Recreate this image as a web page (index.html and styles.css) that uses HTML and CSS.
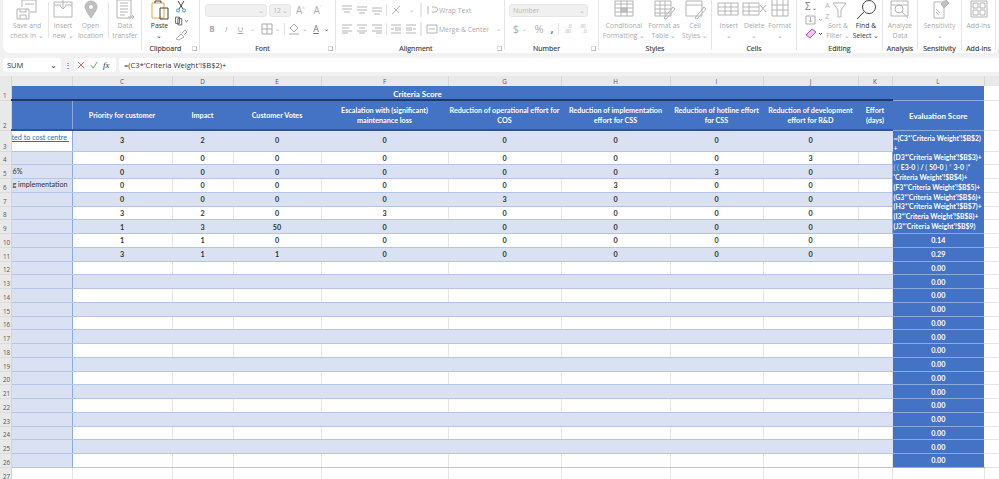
FILE: index.html
```html
<!DOCTYPE html>
<html lang="en">
<head>
<meta charset="utf-8">
<title>Criteria Score</title>
<link rel="stylesheet" href="styles.css">
</head>
<body>
<div class="app">
<header class="ribbon">
  <section class="group g-file">
    <div class="tools">
      <div class="tool t-save"><svg class="ic" viewBox="0 0 28 20"><path d="M4 9h12v10H4zM7 9v3h6V9M7 19v-4h6v4M9 7V0h14v12h-6M12 4h9"/></svg><span>Save and<br>check in ⌄</span></div>
      <i class="vsep"></i>
      <div class="tool t-new"><svg class="ic" viewBox="0 0 28 20"><path d="M5 2h18v15H5zM5 5h7M16 5h7M14 -2v11M11 6l3 3 3-3"/></svg><span>Insert<br>new ⌄</span></div>
      <div class="tool t-open"><svg class="ic" viewBox="0 0 28 20"><path d="M14 18C10 12 8 9 8 7a6 6 0 0 1 12 0c0 2-2 5-6 11z" class="fill"/><circle cx="14" cy="7" r="2.500" class="hole"/></svg><span>Open<br>location</span></div>
      <i class="vsep"></i>
      <div class="tool t-data"><svg class="ic" viewBox="0 0 28 20"><path d="M6 0h14v18H6zM9 3h8M9 6h8M9 9h8M9 12h8M9 15h5M17 17h6M21 15l2 2-2 2"/></svg><span>Data<br>transfer</span></div>
    </div>
  </section>
  <section class="group g-clip">
    <div class="tools">
      <div class="tool t-paste"><svg class="ic" viewBox="0 0 28 20"><path class="orange" d="M6 3h12v15H6z"/><path class="dark" d="M9 3V1h6v2M14 8h8v11h-8z"/></svg><span class="dark-label">Paste<br>⌄</span></div>
      <div class="stack">
        <svg class="mini" viewBox="0 0 14 12"><path class="dark" d="M4 0l5 8M10 0L5 8"/><circle class="blue" cx="4" cy="9.500" r="1.500"/><circle class="blue" cx="10" cy="9.500" r="1.500"/></svg>
        <svg class="mini" viewBox="0 0 18 12"><path class="dark" d="M2 1h5v8H2zM5 3h5v8H5zM14 5l2 2 2-2"/></svg>
        <svg class="mini" viewBox="0 0 14 12"><path d="M2 10l5-5 3 3-5 3zM8 4l3-3 2 2-3 3"/></svg>
      </div>
    </div>
    <h2>Clipboard</h2><b class="launch"></b>
  </section>
  <section class="group g-font">
    <div class="rows">
      <div class="row r-font"><div class="combo c-name"><u>⌄</u></div><div class="combo c-size">12<u>⌄</u></div><span class="glyph big">A<sup>^</sup></span><span class="glyph big">A<sup>˅</sup></span></div>
      <div class="row r-fmt"><span class="glyph bold">B</span><span class="glyph ital">I</span><span class="glyph und">U</span><span class="chev">⌄</span><svg class="mini m-border" viewBox="0 0 14 12"><path d="M2 1h10v10H2zM7 1v10M2 6h10"/></svg><span class="chev narrow">⌄</span><i class="thin t-font"></i><svg class="mini" viewBox="0 0 14 12"><path d="M7 1l4 4-4 4-4-4zM2 11h10"/></svg><span class="chev narrow">⌄</span><span class="glyph und2">A</span><span class="chev narrow dark-chev">⌄</span></div>
    </div>
    <h2>Font</h2><b class="launch"></b>
  </section>
  <section class="group g-align">
    <div class="rows">
      <div class="row r-al"><svg class="lines" viewBox="0 0 12 10"><path d="M1 1h10M1 4h10M3 7h6"/></svg><svg class="lines" viewBox="0 0 12 10"><path d="M1 2h10M1 5h10M3 8h6"/></svg><svg class="lines" viewBox="0 0 12 10"><path d="M1 3h10M1 6h10M3 9h6"/></svg><i class="thin"></i><svg class="lines" viewBox="0 0 12 10"><path d="M2 9l8-8M4 3l5 5"/></svg><span class="chev c12">⌄</span><i class="thick"></i><span class="text-tool"><svg class="lines" viewBox="0 0 12 10"><path d="M2 1v8M6 2h3a2 2 0 0 1 0 5H6"/></svg>Wrap Text</span></div>
      <div class="row r-al"><svg class="lines" viewBox="0 0 12 10"><path d="M1 1h10M1 4h7M1 7h10M1 9h6"/></svg><svg class="lines" viewBox="0 0 12 10"><path d="M1 1h10M3 4h6M1 7h10M3 9h6"/></svg><svg class="lines" viewBox="0 0 12 10"><path d="M1 1h10M4 4h7M1 7h10M5 9h6"/></svg><i class="thin"></i><svg class="lines" viewBox="0 0 12 10"><path d="M1 1h10M5 4h6M5 6h6M1 9h10M4 5H1"/></svg><svg class="lines" viewBox="0 0 12 10"><path d="M1 1h10M1 4h6M1 6h6M1 9h10M8 5h3"/></svg><i class="thick"></i><span class="text-tool"><svg class="lines" viewBox="0 0 12 10"><path d="M1 1h10v8H1zM3 5h6"/></svg>Merge &amp; Center<span class="chev wide">⌄</span></span></div>
    </div>
    <h2>Alignment</h2><b class="launch"></b>
  </section>
  <section class="group g-num">
    <div class="rows">
      <div class="row"><div class="combo c-num">Number<u>⌄</u></div></div>
      <div class="row r-num"><span class="glyph cur">$</span><span class="chev">⌄</span><span class="glyph cur pct">%</span><span class="glyph cur com">,</span><i class="thin"></i><span class="dec">←.0<br>.00</span><span class="dec">.00<br>→.0</span></div>
    </div>
    <h2>Number</h2><b class="launch"></b>
  </section>
  <section class="group g-styles">
    <div class="tools">
      <div class="tool t-cond"><svg class="ic" viewBox="0 0 28 20"><path d="M5 1h18v15H5zM5 4h18M5 8h18M5 12h18M11 1v15M17 1v15"/><path class="fill" d="M11 8h6v4h-6z"/></svg><span>Conditional<br>Formatting ⌄</span></div>
      <div class="tool t-tab"><svg class="ic" viewBox="0 0 28 20"><path d="M5 1h16v15H5zM5 5h16M5 9h16M5 13h16M10 1v15M15 1v15M14 18l9-11 2 2-9 10z"/></svg><span>Format as<br>Table ⌄</span></div>
      <div class="tool t-cell"><svg class="ic" viewBox="0 0 28 20"><path d="M5 1h16v15H5zM5 5h16M14 18l9-11 2 2-9 10z"/></svg><span>Cell<br>Styles ⌄</span></div>
    </div>
    <h2>Styles</h2>
  </section>
  <section class="group g-cells">
    <div class="tools">
      <div class="tool t-cl"><svg class="ic" viewBox="0 0 28 20"><path d="M3 3h20v12H3zM3 7h20M3 11h20M10 3v12M16 3v12"/></svg><span>Insert<br>⌄</span></div>
      <div class="tool t-cl"><svg class="ic" viewBox="0 0 28 20"><path d="M3 3h16v12H3zM3 7h16M3 11h16M9 3v12M20 5l6 7M26 5l-6 7"/></svg><span>Delete<br>⌄</span></div>
      <div class="tool t-cl"><svg class="ic" viewBox="0 0 28 20"><path d="M6 -1h16v17H6zM6 5h16M6 10h16M11 -1v17M17 -1v17"/></svg><span>Format<br>⌄</span></div>
    </div>
    <h2>Cells</h2>
  </section>
  <section class="group g-edit">
    <div class="tools">
      <div class="stack s-edit">
        <span class="sigma">Σ<span class="chev dark-chev">⌄</span></span>
        <svg class="mini m-wide" viewBox="0 0 18 12"><path d="M1 2h9v8H1zM5.500 3v5M4 6.500l1.500 1.500 1.500-1.500M14 5l1.500 1.500L17 5"/></svg>
        <svg class="mini m-wide" viewBox="0 0 18 12"><path class="purple" d="M1 7l6-6 4 3-6 6z"/><path class="dark" d="M14 5l1.500 1.500L17 5"/></svg>
      </div>
      <div class="tool t-sort"><svg class="ic" viewBox="0 0 28 20"><text x="1" y="8.200" class="svgt">A</text><text x="1" y="18.500" class="svgt">Z</text><path d="M9 3h13l-5 7v7h-3v-7z"/></svg><span>Sort &amp;<br>Filter ⌄</span></div>
      <div class="tool t-find"><svg class="ic" viewBox="0 0 28 20"><circle class="dark" cx="17" cy="7" r="6.500"/><path class="dark" d="M12 12l-7 7"/></svg><span class="dark-label">Find &amp;<br>Select ⌄</span></div>
    </div>
    <h2>Editing</h2>
  </section>
  <section class="group g-an">
    <div class="tools">
      <div class="tool t-an"><svg class="ic" viewBox="0 0 28 20"><path d="M5 1h17v15H5zM5 5h17"/><circle cx="13" cy="9" r="4"/><path d="M16 12l6 6"/></svg><span>Analyze<br>Data</span></div>
    </div>
    <h2>Analysis</h2>
  </section>
  <section class="group g-sens">
    <div class="tools">
      <div class="tool t-se"><svg class="ic" viewBox="0 0 28 20"><path d="M8 2h10v16H8z"/><path class="fill" d="M15 4l5-4 3 3-5 5z"/><path d="M10 9l4 4M10 12l3 3"/></svg><span>Sensitivity<br>⌄</span></div>
    </div>
    <h2>Sensitivity</h2>
  </section>
  <section class="group g-add">
    <div class="tools">
      <div class="tool t-ad"><svg class="ic" viewBox="0 0 28 20"><path d="M6 1h16v16H6zM8 3h5v5H8zM15 3h5v5h-5zM8 10h5v5H8zM15 10h5v5h-5z"/></svg><span>Add-ins</span></div>
    </div>
    <h2>Add-ins</h2>
  </section>
</header>

<div class="formula">
  <div class="namebox"><span>SUM</span><span class="nb-chev">⌄</span></div>
  <div class="dots">⋮</div>
  <div class="fbtns">
    <svg class="fb" viewBox="0 0 10 10"><path class="red" d="M1 1l8 8M9 1l-8 8"/></svg>
    <svg class="fb" viewBox="0 0 10 10"><path class="green" d="M1 5l3 4 5-8"/></svg>
    <span class="fx">fx</span>
  </div>
  <div class="finput">=(C3*'Criteria Weight'!$B$2)+</div>
</div>

<div class="sheet">
<table>
  <colgroup>
    <col class="c-rh"><col class="c-a"><col class="c-c"><col class="c-d"><col class="c-e"><col class="c-f"><col class="c-g"><col class="c-h"><col class="c-i"><col class="c-j"><col class="c-k"><col class="c-l"><col class="c-m">
  </colgroup>
  <thead>
    <tr class="hdr"><th class="corner"></th><th></th><th>C</th><th>D</th><th>E</th><th>F</th><th>G</th><th>H</th><th>I</th><th>J</th><th>K</th><th>L</th><th></th></tr>
  </thead>
  <tbody>
    <tr class="r1"><th>1</th><td class="blue-dark"></td><td class="blue-dark title" colspan="7">Criteria Score</td><td class="blue-dark"></td><td class="blue-dark"></td><td class="blue-top"></td><td class="out"></td></tr>
    <tr class="r2"><th>2</th><td class="h h-a"></td><td class="h">Priority for customer</td><td class="h">Impact</td><td class="h">Customer Votes</td><td class="h">Escalation with (significant)<br>maintenance loss</td><td class="h">Reduction of operational effort for<br>COS</td><td class="h">Reduction of implementation<br>effort for CSS</td><td class="h">Reduction of hotline effort<br>for CSS</td><td class="h">Reduction of development<br>effort for R&amp;D</td><td class="h">Effort<br>(days)</td><td class="h score-h">Evaluation Score</td><td class="out"></td></tr>
    <tr class="r3 band"><th>3</th><td class="a a-link"><a href="#">ted to cost centre&nbsp;</a></td><td>3</td><td>2</td><td>0</td><td>0</td><td>0</td><td>0</td><td>0</td><td>0</td><td></td>
      <td class="score edit" rowspan="7">=(C3*'Criteria Weight'!$B$2)<br>+<br>(D3*'Criteria Weight'!$B$3)+<br><span class="p1">(</span> <span class="p2">(</span> E3-0 <span class="p2">)</span> / <span class="p3">(</span> 50-0 <span class="p3">)</span> <span class="p4">*</span> 3-0 <span class="p1">)</span>*<br>'Criteria Weight'!$B$4)+<br>(F3*'Criteria Weight'!$B$5)+<br>(G3*'Criteria Weight'!$B$6)+<br>(H3*'Criteria Weight'!$B$7)+<br>(I3*'Criteria Weight'!$B$8)+<br>(J3*'Criteria Weight'!$B$9)</td><td class="out"></td></tr>
    <tr><th>4</th><td class="a"></td><td>0</td><td>0</td><td>0</td><td>0</td><td>0</td><td>0</td><td>0</td><td>3</td><td></td><td class="out"></td></tr>
    <tr class="band"><th>5</th><td class="a a-text">6%</td><td>0</td><td>0</td><td>0</td><td>0</td><td>0</td><td>0</td><td>3</td><td>0</td><td></td><td class="out"></td></tr>
    <tr><th>6</th><td class="a a-text">g implementation</td><td>0</td><td>0</td><td>0</td><td>0</td><td>0</td><td>3</td><td>0</td><td>0</td><td></td><td class="out"></td></tr>
    <tr class="band"><th>7</th><td class="a"></td><td>0</td><td>0</td><td>0</td><td>0</td><td>3</td><td>0</td><td>0</td><td>0</td><td></td><td class="out"></td></tr>
    <tr><th>8</th><td class="a"></td><td>3</td><td>2</td><td>0</td><td>3</td><td>0</td><td>0</td><td>0</td><td>0</td><td></td><td class="out"></td></tr>
    <tr class="band"><th>9</th><td class="a"></td><td>1</td><td>3</td><td>50</td><td>0</td><td>0</td><td>0</td><td>0</td><td>0</td><td></td><td class="out"></td></tr>
    <tr><th>10</th><td class="a"></td><td>1</td><td>1</td><td>0</td><td>0</td><td>0</td><td>0</td><td>0</td><td>0</td><td></td><td class="score">0.14</td><td class="out"></td></tr>
    <tr class="band"><th>11</th><td class="a"></td><td>3</td><td>1</td><td>1</td><td>0</td><td>0</td><td>0</td><td>0</td><td>0</td><td></td><td class="score">0.29</td><td class="out"></td></tr>
    <tr><th>12</th><td class="a"></td><td></td><td></td><td></td><td></td><td></td><td></td><td></td><td></td><td></td><td class="score">0.00</td><td class="out"></td></tr>
    <tr class="band"><th>13</th><td class="a"></td><td></td><td></td><td></td><td></td><td></td><td></td><td></td><td></td><td></td><td class="score">0.00</td><td class="out"></td></tr>
    <tr><th>14</th><td class="a"></td><td></td><td></td><td></td><td></td><td></td><td></td><td></td><td></td><td></td><td class="score">0.00</td><td class="out"></td></tr>
    <tr class="band"><th>15</th><td class="a"></td><td></td><td></td><td></td><td></td><td></td><td></td><td></td><td></td><td></td><td class="score">0.00</td><td class="out"></td></tr>
    <tr><th>16</th><td class="a"></td><td></td><td></td><td></td><td></td><td></td><td></td><td></td><td></td><td></td><td class="score">0.00</td><td class="out"></td></tr>
    <tr class="band"><th>17</th><td class="a"></td><td></td><td></td><td></td><td></td><td></td><td></td><td></td><td></td><td></td><td class="score">0.00</td><td class="out"></td></tr>
    <tr><th>18</th><td class="a"></td><td></td><td></td><td></td><td></td><td></td><td></td><td></td><td></td><td></td><td class="score">0.00</td><td class="out"></td></tr>
    <tr class="band"><th>19</th><td class="a"></td><td></td><td></td><td></td><td></td><td></td><td></td><td></td><td></td><td></td><td class="score">0.00</td><td class="out"></td></tr>
    <tr><th>20</th><td class="a"></td><td></td><td></td><td></td><td></td><td></td><td></td><td></td><td></td><td></td><td class="score">0.00</td><td class="out"></td></tr>
    <tr class="band"><th>21</th><td class="a"></td><td></td><td></td><td></td><td></td><td></td><td></td><td></td><td></td><td></td><td class="score">0.00</td><td class="out"></td></tr>
    <tr><th>22</th><td class="a"></td><td></td><td></td><td></td><td></td><td></td><td></td><td></td><td></td><td></td><td class="score">0.00</td><td class="out"></td></tr>
    <tr class="band"><th>23</th><td class="a"></td><td></td><td></td><td></td><td></td><td></td><td></td><td></td><td></td><td></td><td class="score">0.00</td><td class="out"></td></tr>
    <tr><th>24</th><td class="a"></td><td></td><td></td><td></td><td></td><td></td><td></td><td></td><td></td><td></td><td class="score">0.00</td><td class="out"></td></tr>
    <tr class="band"><th>25</th><td class="a"></td><td></td><td></td><td></td><td></td><td></td><td></td><td></td><td></td><td></td><td class="score">0.00</td><td class="out"></td></tr>
    <tr><th>26</th><td class="a"></td><td></td><td></td><td></td><td></td><td></td><td></td><td></td><td></td><td></td><td class="score">0.00</td><td class="out"></td></tr>
    <tr class="r27"><th>27</th><td class="blank"></td><td class="blank"></td><td class="blank"></td><td class="blank"></td><td class="blank"></td><td class="blank"></td><td class="blank"></td><td class="blank"></td><td class="blank"></td><td class="blank"></td><td class="blank"></td><td class="blank"></td><td class="out"></td></tr>
  </tbody>
</table>
</div>
</div>
</body>
</html>
```
FILE: styles.css
```css
* { box-sizing: border-box; }
html, body { margin: 0; height: 100%; overflow: hidden; }
body { background: #f1f1f1; font-family: "Open Sans", "Noto Sans", sans-serif; color: #444; }
.app { width: 999px; height: 479px; display: flex; flex-direction: column; overflow: hidden; }

/* ribbon */
.ribbon { height: 53px; margin-left: 3px; flex: none; display: flex; align-items: flex-start; background: #fff; border-radius: 0 0 7px 7px; overflow: hidden; }
.group { position: relative; flex: none; height: 50px; display: flex; flex-direction: column; border-right: 1px solid #e4e4e4; }
.group h2 { margin: auto 0 -3px; font-size: 7px; line-height: 9px; font-weight: 400; color: #3c3c3c; text-align: center; -webkit-text-stroke: .15px #3c3c3c; }
.launch { position: absolute; right: 2px; bottom: -1px; width: 5px; height: 5px; border: 1px solid #bbb; border-top-color: #ddd; border-left-color: #ddd; }
.g-file { width: 139px; }
.g-clip { width: 58px; padding-right: 10px; }
.g-font { width: 136px; padding-right: 10px; }
.g-align { width: 169px; padding-right: 8px; }
.g-num { width: 94px; padding-right: 10px; }
.g-styles { width: 113px; }
.g-cells { width: 85px; }
.g-edit { width: 86px; }
.g-an { width: 35px; }
.g-sens { width: 44px; }
.g-add { width: 34px; }

.tools { display: flex; height: 41px; }
.tool { display: flex; flex-direction: column; align-items: center; flex: none; font-size: 6.800px; line-height: 9.500px; color: #ababab; text-align: center; white-space: nowrap; }
.tool span { display: block; margin-top: 1px; }
.ic { width: 28px; height: 20px; display: block; fill: none; stroke: #b4b4b4; stroke-width: 1; flex: none; }
.ic .fill, .fill { fill: #c0c0c0; }
.hole { fill: #fff; }
.dark { stroke: #444; fill: none; }
.orange { stroke: #e8a33a; fill: none; }
.blue { stroke: #4a90d0; fill: none; }
.purple { stroke: #b04ec0; fill: #e8c8ee; }
.dark-label { color: #333; }
.svgt { font-size: 7.500px; fill: #b4b4b4; stroke: none; font-family: "Open Sans", sans-serif; }
.vsep { flex: none; width: 1px; height: 36px; background: #e6e6e6; margin-top: 2px; }

.t-save { width: 42px; margin-left: 3px; }
.t-new { width: 28px; }
.t-open { width: 27px; margin-right: 4px; }
.t-data { width: 32px; }
.t-paste { width: 35px; }
.stack { display: flex; flex-direction: column; gap: 2px; padding-top: 1px; width: 20px; align-items: flex-start; margin-left: -3px; }
.mini { width: 14px; height: 12px; fill: none; stroke: #aaa; stroke-width: 1; flex: none; }
.m-wide { width: 18px; }

.rows { display: flex; flex-direction: column; height: 41px; padding-top: 3px; gap: 5px; }
.row { display: flex; align-items: center; height: 14px; white-space: nowrap; }
.r-font { padding-left: 5px; gap: 2px; }
.combo { height: 13px; border: 1px solid #e6e6e6; border-radius: 3px; background: #f0f0f0; font-size: 6.800px; line-height: 11px; color: #b8b8b8; display: flex; justify-content: space-between; padding: 0 2px 0 3px; }
.combo u { text-decoration: none; }
.c-name { width: 70px; justify-content: flex-end; }
.c-size { width: 24px; }
.glyph { font-size: 9px; line-height: 12px; color: #aaa; flex: none; }
.big { width: 15px; text-align: center; font-size: 10px; }
.big sup { font-size: 5px; line-height: 0; }
.r-fmt { padding-left: 5px; }
.bold { font-weight: 700; width: 14px; font-size: 8px; text-align: center; }
.ital { font-style: italic; width: 14px; font-size: 8px; text-align: center; }
.und { text-decoration: underline; width: 15px; font-size: 8px; text-align: center; }
.und2 { text-decoration: underline; width: 14px; margin-left: 1px; text-align: center; color: #777; }
.chev { font-size: 6px; line-height: 8px; color: #aaa; width: 9px; text-align: center; flex: none; }
.narrow { width: 7px; }
.c12 { width: 12px; }
.m-border { margin-left: 3px; }
.dark-chev { color: #333; }
.wide { margin-left: 4px; }
.thin { flex: none; width: 1px; height: 12px; background: #e2e2e2; }
.t-font { margin: 0 2px 0 3px; }
.thick { flex: none; width: 2px; height: 14px; background: #e8e8e8; margin-right: 1px; }

.r-al { padding-left: 5px; gap: 3px; }
.lines { width: 12px; height: 10px; fill: none; stroke: #b4b4b4; flex: none; }
.text-tool { display: flex; align-items: center; gap: 1px; font-size: 6.800px; color: #ababab; }

.c-num { width: 84px; margin-left: 4px; }
.r-num { padding-left: 7px; }
.cur { font-size: 11px; width: 8px; text-align: center; color: #aaa; }
.pct { margin-left: 3px; width: 14px; }
.com { color: #777; width: 10px; margin-left: 1px; font-weight: 700; }
.r-num .thin { margin: 0 2px 0 1px; }
.dec { font-size: 4.500px; line-height: 5px; color: #aaa; width: 13px; margin-right: 2px; text-align: center; flex: none; }

.g-styles .tools { padding-left: 7px; }
.t-cond { width: 36px; }
.t-tab { width: 36px; margin-left: 4px; }
.t-cell { width: 26px; }
.g-cells .tools { padding-left: 4px; }
.t-cl { width: 25.500px; }
.g-edit .tools { padding-left: 3px; }
.s-edit { width: 26px; padding-left: 5px; margin-left: 0; }
.sigma { font-size: 10px; line-height: 11px; color: #777; white-space: nowrap; }
.sigma .chev { width: 8px; display: inline-block; }
.t-sort { width: 24px; }
.t-find { width: 32px; }
.t-an, .t-se, .t-ad { width: 100%; }

/* formula bar */
.formula { height: 14px; margin-top: 5px; flex: none; display: flex; align-items: stretch; padding-left: 3px; }
.namebox { width: 58px; background: #fff; border-radius: 3px; font-size: 7.500px; line-height: 14px; color: #333; display: flex; justify-content: space-between; padding: 0 4px; flex: none; }
.dots { width: 13px; text-align: center; font-size: 8px; line-height: 14px; color: #333; flex: none; }
.fbtns { width: 42px; background: #fff; border-radius: 3px; display: flex; align-items: center; gap: 5px; padding-left: 3px; flex: none; }
.fb { width: 8px; height: 8px; fill: none; flex: none; }
.red { stroke: #d8453a; }
.green { stroke: #3a9a55; }
.fx { font-family: "Liberation Serif", serif; font-style: italic; font-size: 9px; line-height: 14px; color: #333; }
.finput { flex: 1; margin-left: 3px; background: #fff; border-radius: 3px 0 0 3px; font-size: 7.600px; line-height: 14px; padding-left: 5px; color: #333; }

/* sheet */
.sheet { flex: 1; margin-top: 4px; overflow: hidden; background: #fff; }
table { table-layout: fixed; border-collapse: collapse; width: 999px; font-family: Lato, "Liberation Sans", sans-serif; font-size: 7.200px; font-weight: 700; color: #333; }
.c-rh { width: 11px; } .c-a { width: 61px; } .c-c { width: 100px; } .c-d { width: 61px; } .c-e { width: 88px; } .c-f { width: 127px; } .c-g { width: 113px; } .c-h { width: 109px; } .c-i { width: 93px; } .c-j { width: 95px; } .c-k { width: 34px; } .c-l { width: 92px; } .c-m { width: 15px; }
tr { height: 13.750px; }
thead tr { height: 10px; }
.r1 { height: 14px; }
.r2 { height: 30px; }
.r3 { height: 21px; }
th { background: #e9e9e9; font-weight: 400; font-size: 6.300px; color: #555; padding: 0; overflow: hidden; border-right: 1px solid #d4d4d4; border-bottom: 1px solid #dcdcdc; font-family: "Open Sans", sans-serif; }
thead th { text-align: center; line-height: 9px; border-right: 1px solid #d6d6d6; border-bottom: 0; }
tbody th { text-align: left; vertical-align: bottom; padding-left: 3px; line-height: 9px; }
td { padding: 2px 0 0; text-align: center; vertical-align: middle; overflow: hidden; white-space: nowrap; line-height: 10px; border-right: 1px solid #e4e4e4; border-bottom: 1px solid #b4c6e7; }
.r3 td { padding-top: 0; }
tr.band td { background: #d9e1f2; border-right-color: #d9e1f2; }
td.a { background: #d9e1f2; border-right: 1px solid #8ea9db; text-align: left; font-weight: 400; }
tr.band td.a { border-right-color: #8ea9db; }
.r3 td.a-link { vertical-align: top; padding-top: 2px; }
tr.band td.a-link { background: #fff; }
.a-link a { color: #2a6fc0; text-decoration: underline; }
td.a-text { color: #333; padding: 0 0 0 1px; }
.blue-dark { background: #4472c4; border-right: 0; border-bottom: 2px solid #1f3864; color: #fff; }
.title { font-size: 8px; }
.blue-top { background: #4472c4; border-right: 0; border-bottom: 1px solid #8ea9db; }
td.h { background: #4472c4; color: #fff; border-right: 1px solid #4472c4; border-bottom: 2px solid #2f5597; }
td.h-a { border-right: 1px solid #8ea9db; }
td.score-h { font-size: 7.900px; border-left: 1px solid #8ea9db; border-right: 0; border-bottom: 1px solid #8ea9db; }
tr td.score, tr.band td.score { background: #4472c4; color: #fff; border-left: 1px solid #8ea9db; border-right: 0; border-bottom: 1px solid #8ea9db; }
.r3 td.edit { text-align: left; font-size: 6.900px; line-height: 9.800px; padding: 2px 0 0 1px; }
tr.band td.out, td.out { background: #fff; border-right: 0; border-bottom: 1px solid #e4e4e4; }
td.blank { background: #fff; border-bottom: 1px solid #e4e4e4; }
.p1 { color: #c9b0e6; } .p2 { color: #7fe0a5; } .p3 { color: #b7eec6; } .p4 { color: #f0a8c4; }
```
